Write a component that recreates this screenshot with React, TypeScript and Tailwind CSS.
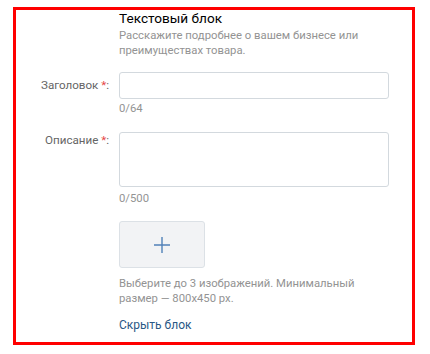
import React from "react";

function Plus() {
  return (
    <svg width="18" height="18" viewBox="0 0 18 18" fill="none">
      <path d="M9 1v16M1 9h16" stroke="#5181b8" strokeWidth="1.4" />
    </svg>
  );
}

export default function App() {
  return (
    <div className="h-[354px] w-[430px] bg-white pl-[13px] pt-[7px] font-['Roboto',sans-serif]">
      <div className="h-[338px] w-[402px] border-[3px] border-[#ff0000]">
        <div className="grid grid-cols-[93px_270px] gap-x-[10px]">
          {/* Block header */}
          <div />
          <div>
            <div className="text-[13.6px] leading-[16px] text-black">Текстовый блок</div>
            <div className="mt-[2px] text-[11.3px] leading-[15px] text-[#939393]">
              Расскажите подробнее о вашем бизнесе или преимуществах товара.
            </div>
          </div>

          {/* Title */}
          <div className="mt-[14px] flex h-[27px] items-center justify-end text-[11.6px] text-[#656565]">
            Заголовок&nbsp;<span className="text-[#e64646]">*</span>:
          </div>
          <div className="mt-[14px]">
            <div className="h-[27px] rounded-[3px] border border-[#d3d9de] bg-white" />
            <div className="mt-[2px] text-[11.3px] leading-[15px] text-[#939393]">0/64</div>
          </div>

          {/* Description */}
          <div className="mt-[16px] flex justify-end text-[11.6px] leading-[16px] text-[#656565]">
            Описание&nbsp;<span className="text-[#e64646]">*</span>:
          </div>
          <div className="mt-[16px]">
            <div className="h-[55px] rounded-[3px] border border-[#d3d9de] bg-white" />
            <div className="mt-[4px] text-[11.3px] leading-[15px] text-[#939393]">0/500</div>
          </div>

          {/* Images */}
          <div />
          <div className="mt-[15px]">
            <div className="flex h-[47px] w-[86px] items-center justify-center rounded-[3px] border border-[#dce1e6] bg-[#f2f3f5]">
              <Plus />
            </div>
            <div className="mt-[8px] text-[11.3px] leading-[15px] text-[#939393]">
              Выберите до 3 изображений. Минимальный размер — 800x450 px.
            </div>
            <div className="mt-[11px] text-[12px] leading-[16px] text-[#2a5885]">Скрыть блок</div>
          </div>
        </div>
      </div>
    </div>
  );
}
